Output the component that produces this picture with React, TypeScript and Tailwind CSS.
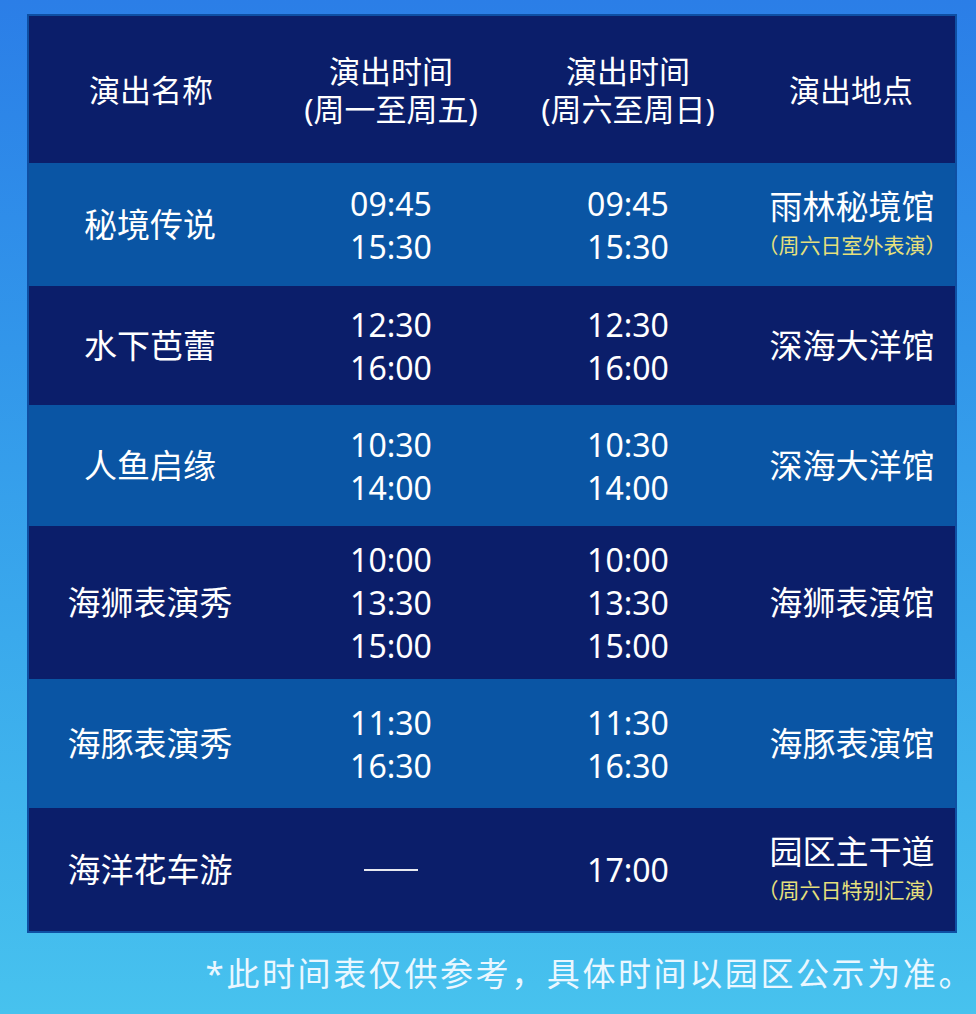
const font = { fontFamily: '"Noto Sans", "Noto Sans CJK SC", sans-serif' }

type Row = { name: string; weekday: string[]; weekend: string[]; venue: string; note?: string; h: string; bg: string }

const rows: Row[] = [
  { name: '秘境传说', weekday: ['09:45', '15:30'], weekend: ['09:45', '15:30'], venue: '雨林秘境馆', note: '（周六日室外表演）', h: 'h-[123px]', bg: 'bg-[#0a55a4]' },
  { name: '水下芭蕾', weekday: ['12:30', '16:00'], weekend: ['12:30', '16:00'], venue: '深海大洋馆', h: 'h-[119px]', bg: 'bg-[#0b1e6a]' },
  { name: '人鱼启缘', weekday: ['10:30', '14:00'], weekend: ['10:30', '14:00'], venue: '深海大洋馆', h: 'h-[121px]', bg: 'bg-[#0a55a4]' },
  { name: '海狮表演秀', weekday: ['10:00', '13:30', '15:00'], weekend: ['10:00', '13:30', '15:00'], venue: '海狮表演馆', h: 'h-[153px]', bg: 'bg-[#0b1e6a]' },
  { name: '海豚表演秀', weekday: ['11:30', '16:30'], weekend: ['11:30', '16:30'], venue: '海豚表演馆', h: 'h-[129px]', bg: 'bg-[#0a55a4]' },
  { name: '海洋花车游', weekday: [], weekend: ['17:00'], venue: '园区主干道', note: '（周六日特别汇演）', h: 'h-[123px]', bg: 'bg-[#0b1e6a]' },
]

function Times({ list }: { list: string[] }) {
  if (list.length === 0) return <span className="block w-[54px] h-[2px] bg-white/90" />
  return (
    <div className="flex flex-col items-center text-[32px] leading-[43px]">
      {list.map((t) => <span key={t}>{t}</span>)}
    </div>
  )
}

export default function App() {
  return (
    <div className="w-[976px] h-[1014px] bg-gradient-to-b from-[#2b7ee7] to-[#47c2ee] pt-[14px] pl-[27px] overflow-hidden text-white" style={font}>
      <div className="w-[930px] border-2 border-[#0e4fa3]">
        <div className="grid grid-cols-[244px_236px_238px_208px] h-[147px] bg-[#0b1e6a] text-[31px] leading-[38px] items-center text-center">
          <div>演出名称</div>
          <div>演出时间<br />(周一至周五)</div>
          <div>演出时间<br />(周六至周日)</div>
          <div>演出地点</div>
        </div>
        {rows.map((r) => (
          <div key={r.name} className={`grid grid-cols-[244px_236px_238px_208px] items-center text-center ${r.h} ${r.bg}`}>
            <div className="text-[33px] pr-[2px]">{r.name}</div>
            <div className="flex justify-center"><Times list={r.weekday} /></div>
            <div className="flex justify-center"><Times list={r.weekend} /></div>
            <div className={`flex flex-col items-center pl-[2px] ${r.note ? 'pb-[6px]' : ''}`}>
              <span className={`text-[33px] ${r.note ? 'leading-[46px]' : 'leading-[44px]'}`}>{r.venue}</span>
              {r.note && <span className="text-[21px] leading-[30px] text-[#e6e07c]">{r.note}</span>}
            </div>
          </div>
        ))}
      </div>
      <p className="mt-[16px] pr-[2px] text-right text-[33px] tracking-[2.6px] text-[#eaf7ff]">*此时间表仅供参考，具体时间以园区公示为准。</p>
    </div>
  )
}
